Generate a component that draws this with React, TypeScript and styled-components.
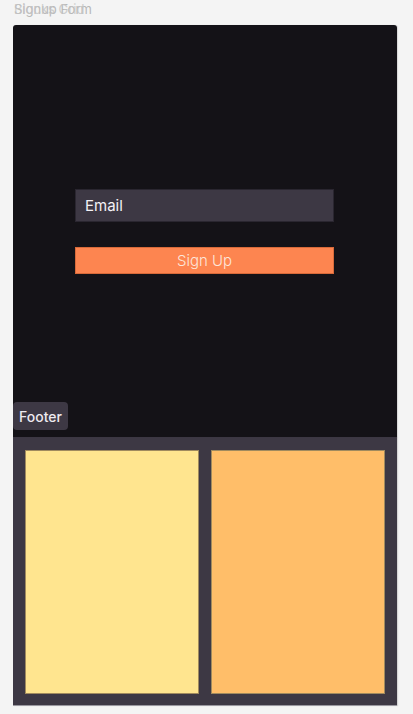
import { createGlobalStyle, styled } from "styled-components";

const Global = createGlobalStyle`
  html, body {
    margin: 0;
    padding: 0;
    background: #f4f4f4;
    font-family: Inter, "Noto Sans", sans-serif;
  }
`;

const Page = styled.div`
  width: 413px;
  height: 714px;
  padding: 0 16px 0 13px;
  box-sizing: border-box;
  display: flex;
  flex-direction: column;
`;

const Title = styled.div`
  position: relative;
  height: 25px;
  padding: 2px 0 0 1px;
  box-sizing: border-box;
  font-size: 13px;
  line-height: 14px;
  color: #b8b8b8;
`;

// second label drawn over the first, as in the source
const Ghost = styled.span`
  position: absolute;
  left: 1px;
  top: 2px;
  color: #c4c4c4;
  opacity: 0.8;
`;

const Stage = styled.section`
  position: relative;
  height: 412px;
  background: #141217;
  border-radius: 3px 3px 0 0;
  box-shadow: 1px 0 1px rgba(0, 0, 0, 0.12);
  display: flex;
  align-items: center;
  justify-content: center;
`;

const Form = styled.form`
  width: 259px;
  margin-right: 1px;
  display: flex;
  flex-direction: column;
  gap: 25px;
`;

const Input = styled.div`
  height: 33px;
  background: #3d3844;
  border: 1px solid #2a2630;
  box-sizing: border-box;
  padding-left: 9px;
  display: flex;
  align-items: center;
  font-size: 15px;
  color: #f4f2f6;
`;

const Button = styled.div`
  height: 27px;
  background: #fd8550;
  border: 1px solid #d86a3a;
  box-sizing: border-box;
  display: flex;
  align-items: center;
  justify-content: center;
  font-size: 15px;
  font-weight: 300;
  color: #fde6da;
`;

const Badge = styled.div`
  position: absolute;
  left: 0;
  bottom: 7px;
  height: 28px;
  padding: 0 6px;
  border-radius: 4px;
  background: #3d3844;
  color: #eeeaf0;
  font-size: 14px;
  font-weight: 500;
  display: flex;
  align-items: center;
`;

const Grid = styled.section`
  height: 269px;
  background: #3d3844;
  border-bottom: 1px solid #9a98a0;
  box-shadow: 1px 0 1px rgba(0, 0, 0, 0.12);
  padding: 13px 12px 11px 12px;
  box-sizing: border-box;
  display: grid;
  grid-template-columns: 1fr 1fr;
  gap: 12px;
`;

const Block = styled.div<{ tone: string }>`
  background: ${({ tone }) => tone};
  border: 1px solid #a08a5e;
`;

export default function App() {
  return (
    <>
      <Global />
      <Page>
        <Title>
          Signup Form
          <Ghost>Blocks Grid</Ghost>
        </Title>
        <Stage>
          <Form>
            <Input>Email</Input>
            <Button>Sign Up</Button>
          </Form>
          <Badge>Footer</Badge>
        </Stage>
        <Grid>
          <Block tone="#ffe58f" />
          <Block tone="#ffbe69" />
        </Grid>
      </Page>
    </>
  );
}
